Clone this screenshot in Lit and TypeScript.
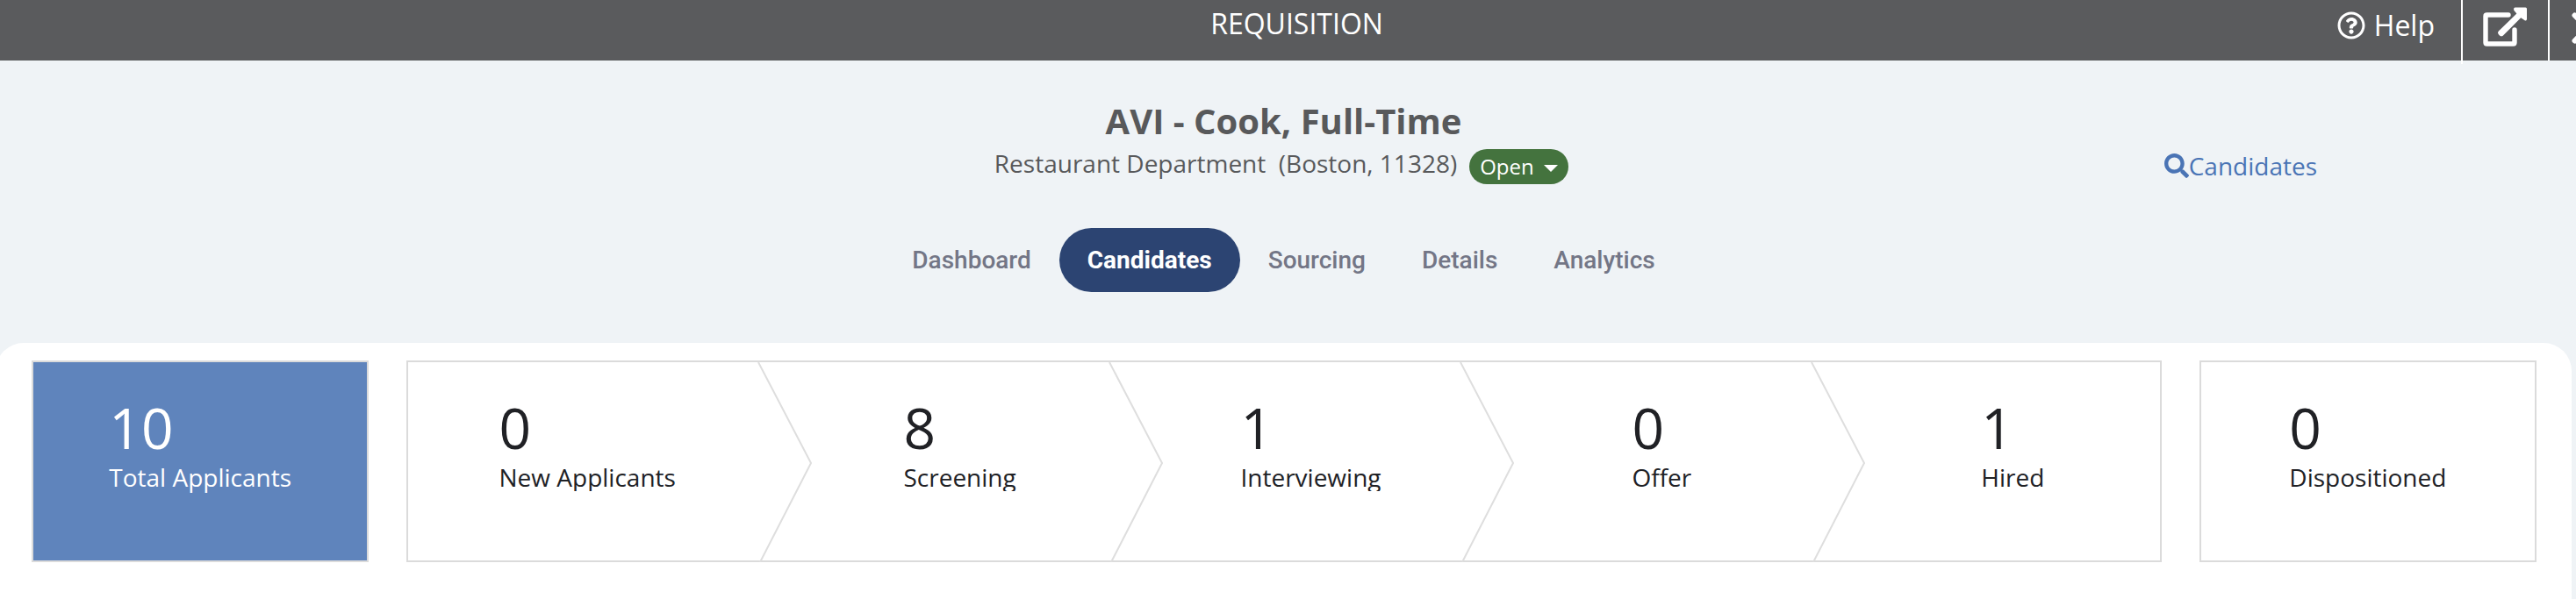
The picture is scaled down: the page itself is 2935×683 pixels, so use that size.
import { LitElement, html, css, svg, nothing } from "lit";
import { customElement, property } from "lit/decorators.js";

interface Stage {
  count: number;
  label: string;
}

const tabs = ["Dashboard", "Candidates", "Sourcing", "Details", "Analytics"];

const stages: Stage[] = [
  { count: 0, label: "New Applicants" },
  { count: 8, label: "Screening" },
  { count: 1, label: "Interviewing" },
  { count: 0, label: "Offer" },
  { count: 1, label: "Hired" },
];

const helpIcon = svg`<svg class="icon-help" viewBox="0 0 512 512" aria-hidden="true"><path fill="currentColor" d="M256 8C119.043 8 8 119.083 8 256c0 136.997 111.043 248 248 248s248-111.003 248-248C504 119.083 392.957 8 256 8zm0 448c-110.532 0-200-89.431-200-200 0-110.495 89.472-200 200-200 110.491 0 200 89.471 200 200 0 110.53-89.431 200-200 200zm107.244-255.2c0 67.052-72.421 68.084-72.421 92.863V300c0 6.627-5.373 12-12 12h-45.647c-6.627 0-12-5.373-12-12v-8.659c0-35.745 27.1-50.034 47.579-61.516 17.561-9.845 28.324-16.541 28.324-29.579 0-17.246-21.999-28.693-39.784-28.693-23.189 0-33.894 10.977-48.942 29.969-4.057 5.12-11.46 6.071-16.666 2.124l-27.824-21.098c-5.107-3.872-6.251-11.066-2.644-16.363C184.846 131.491 214.94 112 261.794 112c49.071 0 101.45 38.304 101.45 88.8zM298 368c0 23.159-18.841 42-42 42s-42-18.841-42-42 18.841-42 42-42 42 18.841 42 42z"/></svg>`;

const openIcon = svg`<svg class="icon-open" viewBox="0 0 50 46" aria-hidden="true"><path fill="none" stroke="currentColor" stroke-width="5.4" stroke-linecap="round" stroke-linejoin="round" d="M29 9H4.5Q3 9 3 10.5V40.500Q3 42 4.500 42H34.500Q36 42 36 40.500V26"/><path fill="currentColor" d="M37 0.500H48.500Q50 0.500 50 2V13.500Q50 16 48 15.400L43.200 12.200L23 32.400Q21 34.200 19 32.400L17.800 31.200Q16 29.200 17.800 27.400L38.400 7.400L35.400 4Q34.200 0.500 37 0.500Z"/></svg>`;

const closeIcon = svg`<svg class="icon-close" viewBox="0 0 36 36" aria-hidden="true"><path fill="none" stroke="currentColor" stroke-width="6" stroke-linecap="round" d="M3.500 3.500L32.500 32.500M32.500 3.500L3.500 32.500"/></svg>`;

const searchIcon = svg`<svg class="icon-search" viewBox="0 0 512 512" aria-hidden="true"><path fill="currentColor" d="M505 442.700L405.300 343c-4.500-4.500-10.600-7-17-7H372c27.600-35.300 44-79.700 44-128C416 93.100 322.900 0 208 0S0 93.100 0 208s93.100 208 208 208c48.300 0 92.700-16.400 128-44v16.300c0 6.400 2.500 12.500 7 17l99.700 99.700c9.400 9.400 24.600 9.400 33.900 0l28.300-28.300c9.400-9.400 9.400-24.600.1-34zM208 336c-70.700 0-128-57.200-128-128 0-70.700 57.200-128 128-128 70.700 0 128 57.200 128 128 0 70.700-57.200 128-128 128z"/></svg>`;

@customElement("stage-count")
class StageCount extends LitElement {
  @property({ type: Number }) count = 0;
  @property() label = "";
  @property({ type: Boolean, reflect: true }) clipped = false;

  static styles = css`
    :host {
      display: block;
      text-align: left;
    }
    .count {
      display: block;
      font-size: 64px;
      line-height: 64px;
    }
    .label {
      display: block;
      margin-top: 8px;
      font-size: 28px;
      line-height: 32px;
      white-space: nowrap;
    }
    :host([clipped]) .label {
      overflow: hidden;
    }
  `;

  render() {
    return html`<span class="count">${this.count}</span><span class="label">${this.label}</span>`;
  }
}

@customElement("app-root")
class AppRoot extends LitElement {
  static styles = css`
    :host {
      display: flex;
      flex-direction: column;
      min-height: 100vh;
      overflow-x: clip;
      background: #eff3f6;
      color: #58595b;
      font-family: "Open Sans", "Noto Sans", sans-serif;
      font-size: 28px;
    }
    * {
      box-sizing: border-box;
    }
    a {
      color: inherit;
      text-decoration: none;
    }
    button,
    select {
      font: inherit;
      color: inherit;
      background: none;
      border: 0;
      margin: 0;
      padding: 0;
      cursor: pointer;
    }
    svg {
      display: block;
      flex: none;
    }

    .topbar {
      display: grid;
      height: 69px;
      background: #5a5b5d;
      color: #fff;
      font-size: 32px;
      line-height: 44px;
    }
    .topbar-title,
    .actions {
      grid-area: 1 / 1;
    }
    .topbar-title {
      margin: 0;
      padding: 5px 0 0 20px;
      text-align: center;
      font-size: 32px;
      font-weight: 400;
    }
    .actions {
      display: flex;
      justify-self: end;
      align-items: flex-start;
      margin-right: -56px;
    }
    .help {
      display: flex;
      align-items: center;
      gap: 10px;
      height: 73px;
      padding: 0 30px 16px 0;
      border-right: 2px solid #fff;
    }
    .tool {
      display: flex;
      justify-content: center;
      height: 69px;
      padding: 8px 24px 0 23px;
      border-right: 2px solid #fff;
    }
    .close {
      padding: 14px 25px 0;
      border-right: 0;
    }
    .icon-help {
      width: 32px;
      height: 32px;
    }
    .icon-open {
      width: 50px;
      height: 46px;
    }
    .icon-close {
      width: 36px;
      height: 36px;
    }

    .content {
      display: flex;
      flex-direction: column;
      flex: 1;
      margin: 0 5px 0 -5px;
    }
    .heading {
      display: grid;
      grid-template-columns: 1fr auto 1fr;
      padding-top: 42px;
    }
    .job {
      grid-column: 2;
      display: flex;
      flex-direction: column;
      align-items: center;
      gap: 5px;
    }
    .job-title {
      margin: 0;
      font-size: 40px;
      line-height: 54px;
      font-weight: 700;
    }
    .job-meta {
      display: flex;
      align-items: flex-start;
      gap: 14px;
      padding-right: 5px;
      line-height: 32px;
      white-space: pre;
    }
    .status {
      position: relative;
      display: block;
      color: #fff;
    }
    .status-select {
      appearance: none;
      display: block;
      height: 40px;
      padding: 0 39px 0 12px;
      border-radius: 20px;
      background: #44733e;
      color: #fff;
      font-size: 24px;
      line-height: 40px;
    }
    .caret {
      position: absolute;
      right: 12px;
      top: 18px;
      width: 16px;
      height: 8px;
      pointer-events: none;
    }
    .search {
      display: flex;
      align-items: center;
      align-self: end;
      justify-self: end;
      margin-right: 290px;
      color: #4a74b5;
      line-height: 42px;
    }
    .icon-search {
      width: 28px;
      height: 28px;
    }

    .tabs {
      display: flex;
      justify-content: center;
      margin-top: 50px;
    }
    .tab {
      padding: 0 32px;
      border-radius: 37px;
      font-family: Roboto, sans-serif;
      font-weight: 500;
      line-height: 73px;
      color: #737686;
    }
    .tab[aria-current] {
      background: #2c4472;
      color: #fff;
      font-weight: 700;
    }

    .panel {
      display: flex;
      align-items: flex-start;
      gap: 43px;
      flex: 1;
      margin-top: 58px;
      padding: 20px 40px 42px 41px;
      border-radius: 32px 32px 0 0;
      background: #fff;
      color: #202125;
    }
    .card,
    .pipeline {
      box-shadow: inset 0 0 0 2px #dbdbdb;
    }
    .card {
      flex: 384 1 0;
      display: flex;
      justify-content: center;
      padding: 45px 0 81px;
    }
    .card.selected {
      background: #5f84bc;
      color: #fff;
    }
    .pipeline {
      flex: 1998 1 0;
      display: grid;
      grid-template-columns: repeat(5, 1fr);
      margin: 0;
      padding: 0;
      list-style: none;
    }
    .stage {
      position: relative;
      display: flex;
    }
    .stage-button {
      flex: 1;
      display: flex;
      justify-content: center;
      padding: 45px 0 81px 61px;
    }
    .stage:first-child .stage-button {
      padding-left: 12px;
    }
    .chevron {
      position: absolute;
      left: 100%;
      top: 2px;
      width: 62px;
      height: calc(100% - 2px);
      pointer-events: none;
    }
  `;

  private renderCard(stage: Stage, selected = false) {
    return html`<button class="card ${selected ? "selected" : ""}" type="button">
      <stage-count .count=${stage.count} .label=${stage.label}></stage-count>
    </button>`;
  }

  render() {
    return html`
      <header class="topbar">
        <h1 class="topbar-title">REQUISITION</h1>
        <div class="actions">
          <a class="help" href="#help">${helpIcon}<span>Help</span></a>
          <button class="tool" type="button" aria-label="Open in new window">${openIcon}</button>
          <button class="tool close" type="button" aria-label="Close">${closeIcon}</button>
        </div>
      </header>
      <main class="content">
        <div class="heading">
          <div class="job">
            <h2 class="job-title">AVI - Cook, Full-Time</h2>
            <div class="job-meta"><span>Restaurant Department  (Boston, 11328)</span><label class="status"><select class="status-select" aria-label="Status"><option>Open</option></select><svg class="caret" viewBox="0 0 16 8" aria-hidden="true"><path fill="currentColor" d="M0 0H16L8 8Z"/></svg></label></div>
          </div>
          <a class="search" href="#search">${searchIcon}<span>Candidates</span></a>
        </div>
        <nav class="tabs" aria-label="Requisition">
          ${tabs.map(
            (tab) => html`<a class="tab" href="#${tab.toLowerCase()}" aria-current=${tab === "Candidates" ? "page" : nothing}>${tab}</a>`
          )}
        </nav>
        <section class="panel">
          ${this.renderCard({ count: 10, label: "Total Applicants" }, true)}
          <ol class="pipeline">
            ${stages.map(
              (stage, i) => html`<li class="stage">
                <button class="stage-button" type="button">
                  <stage-count clipped .count=${stage.count} .label=${stage.label}></stage-count>
                </button>
                ${i < stages.length - 1
                  ? html`<svg class="chevron" viewBox="0 0 62 228" preserveAspectRatio="none" aria-hidden="true"><path d="M1 0L61 115L3 228" fill="none" stroke="#dedede" stroke-width="2"/></svg>`
                  : nothing}
              </li>`
            )}
          </ol>
          ${this.renderCard({ count: 0, label: "Dispositioned" })}
        </section>
      </main>
    `;
  }
}
